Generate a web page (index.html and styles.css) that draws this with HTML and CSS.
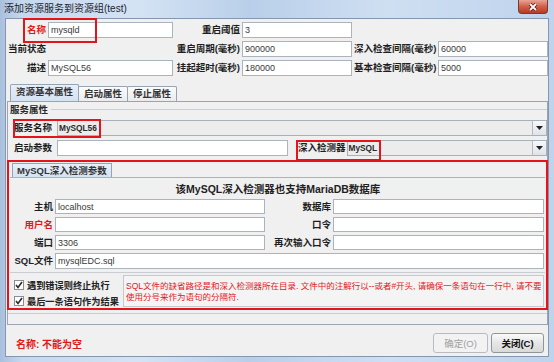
FILE: index.html
```html
<!DOCTYPE html>
<html lang="zh-CN">
<head>
  <meta charset="UTF-8" />
  <title>添加资源服务到资源组(test)</title>
  <link rel="stylesheet" href="styles.css">
</head>
<body>
  <div class="window">
    <div class="titlebar">
      <span class="title">添加资源服务到资源组(test)</span>
      <span class="close">
        <svg width="12" height="10" viewBox="0 0 12 10"><path d="M3 2 L9 8 M9 2 L3 8" stroke="#5a1a12" stroke-width="3.2"/><path d="M3 2 L9 8 M9 2 L3 8" stroke="#fff" stroke-width="1.8"/></svg>
      </span>
    </div>

    <div class="client">
      <div class="top-form">
        <label class="lbl req">名称</label>
        <input class="field" value="mysqld" />
        <label class="lbl">重启阈值</label>
        <input class="field" value="3" />
        <span></span><span></span>

        <label class="lbl">当前状态</label>
        <span class="blank"></span>
        <label class="lbl">重启周期(毫秒)</label>
        <input class="field" value="900000" />
        <label class="lbl">深入检查间隔(毫秒)</label>
        <input class="field" value="60000" />

        <label class="lbl">描述</label>
        <input class="field" value="MySQL56" />
        <label class="lbl">挂起超时(毫秒)</label>
        <input class="field" value="180000" />
        <label class="lbl">基本检查间隔(毫秒)</label>
        <input class="field" value="5000" />
      </div>

      <div class="tabs">
        <span class="tab active">资源基本属性</span>
        <span class="tab">启动属性</span>
        <span class="tab">停止属性</span>
      </div>

      <div class="tab-panel">
        <div class="group-head">服务属性</div>
        <div class="group-body">
          <div class="row">
            <label class="lbl row-lbl">服务名称</label>
            <div class="combo">
              <span class="combo-value">MySQL56</span>
              <span class="combo-btn"><svg width="7" height="5" viewBox="0 0 7 5"><path d="M0 0 H7 L3.5 4 Z" fill="#222"/></svg></span>
            </div>
          </div>
          <div class="row">
            <label class="lbl row-lbl">启动参数</label>
            <input class="field args" value="" />
            <label class="lbl det-lbl">深入检测器</label>
            <div class="combo">
              <span class="combo-value">MySQL</span>
              <span class="combo-btn"><svg width="7" height="5" viewBox="0 0 7 5"><path d="M0 0 H7 L3.5 4 Z" fill="#222"/></svg></span>
            </div>
          </div>

          <div class="detector">
            <div class="subtabs">
              <span class="subtab">MySQL深入检测参数</span>
            </div>
            <div class="subpanel">
              <div class="heading">该MySQL深入检测器也支持MariaDB数据库</div>
              <div class="param-grid">
                <label class="lbl">主机</label>
                <input class="field" value="localhost" />
                <label class="lbl">数据库</label>
                <input class="field" value="" />

                <label class="lbl req">用户名</label>
                <input class="field" value="" />
                <label class="lbl">口令</label>
                <input class="field" value="" />

                <label class="lbl">端口</label>
                <input class="field" value="3306" />
                <label class="lbl">再次输入口令</label>
                <input class="field" value="" />

                <label class="lbl">SQL文件</label>
                <input class="field wide" value="mysqlEDC.sql" />
              </div>
            </div>
            <div class="options">
              <div class="checks">
                <div class="check"><span class="box"><svg width="8" height="8" viewBox="0 0 8 8"><path d="M1 4 L3 6.5 L7 1" fill="none" stroke="#2b2b2b" stroke-width="1.6"/></svg></span>遇到错误则终止执行</div>
                <div class="check"><span class="box"><svg width="8" height="8" viewBox="0 0 8 8"><path d="M1 4 L3 6.5 L7 1" fill="none" stroke="#2b2b2b" stroke-width="1.6"/></svg></span>最后一条语句作为结果</div>
              </div>
              <div class="note">SQL文件的缺省路径是和深入检测器所在目录. 文件中的注解行以--或者#开头, 请确保一条语句在一行中, 请不要<br>使用分号来作为语句的分隔符.</div>
            </div>
          </div>
        </div>
      </div>

      <div class="footer">
        <span class="status">名称: 不能为空</span>
        <div class="buttons">
          <button class="btn" disabled>确定(O)</button>
          <button class="btn primary">关闭(C)</button>
        </div>
      </div>
    </div>

    <!-- annotation boxes -->
    <span class="mark mark-name"></span>
    <span class="mark mark-service"></span>
    <span class="mark mark-detector"></span>
  </div>
</body>
</html>
```

FILE: styles.css
```css
body {
  margin: 0;
  width: 554px;
  height: 362px;
  overflow: hidden;
  font-family: "Liberation Sans", "Noto Sans CJK SC", sans-serif;
}
.window {
  position: relative;
  box-sizing: border-box;
  width: 554px;
  height: 362px;
  padding: 0 5px 5px 5px;
  display: flex;
  flex-direction: column;
  background: linear-gradient(90deg, #a9c0dd 0, #c6d8ee 4%, #d4e3f4 25%, #b9cfe9 45%, #cfdff2 70%, #bed3ec 100%);
}
.titlebar {
  height: 18px;
  display: flex;
  justify-content: space-between;
  align-items: flex-start;
}
.title {
  margin: 3px 0 0 -1px;
  font-size: 10px;
  line-height: 12px;
  color: #1c2430;
}
.close {
  width: 30px;
  height: 14px;
  margin-right: 1px;
  box-sizing: border-box;
  border: 1px solid #7a3a30;
  border-top: none;
  border-radius: 0 0 4px 4px;
  background: linear-gradient(#e9a596, #d0604a 50%, #b93a24);
  display: flex;
  align-items: center;
  justify-content: center;
}
.client {
  flex: 1;
  display: flex;
  flex-direction: column;
  background: #f0f0f0;
  border: 1px solid #8596ae;
}
.lbl {
  font-size: 9.5px;
  font-weight: bold;
  color: #1e1e1e;
  text-align: right;
  white-space: nowrap;
  line-height: 16px;
}
.lbl.req {
  color: #e01818;
}
.field {
  box-sizing: border-box;
  width: 100%;
  min-width: 0;
  height: 16px;
  margin: 0;
  padding: 0 2px;
  border: 1px solid #abb3bd;
  background: #fff;
  font-family: "Liberation Sans", sans-serif;
  font-size: 9px;
  color: #3a3a3a;
  outline: none;
}

/* top form */
.top-form {
  display: grid;
  grid-template-columns: 39px 125px 65px 110px 82px 110px;
  grid-auto-rows: 16px;
  column-gap: 2px;
  row-gap: 3px;
  padding: 3px 0 0 1px;
}

/* tabs */
.tabs {
  display: flex;
  align-items: flex-end;
  height: 16px;
  margin: 9px 0 0 4px;
}
.tab {
  height: 14px;
  line-height: 14px;
  padding: 0 5px;
  margin-right: -1px;
  border: 1px solid #97a3b1;
  border-bottom: none;
  border-radius: 2px 2px 0 0;
  background: linear-gradient(#fbfbfb, #e9ebee);
  font-size: 9.5px;
  font-weight: bold;
  color: #333;
}
.tab.active {
  height: 16px;
  background: linear-gradient(#e7eff9, #d5e2f2);
  position: relative;
  z-index: 1;
}
.tab-panel {
  flex: 1;
  margin-left: 1px;
  border: 1px solid #9aa4b0;
  display: flex;
  flex-direction: column;
}
.group-head {
  display: flex;
  align-items: center;
  height: 12px;
  margin-top: 1px;
  padding-left: 2px;
  font-size: 9.5px;
  font-weight: bold;
  color: #2a2a2a;
}
.group-head::after {
  content: "";
  flex: 1;
  margin-left: 3px;
  border-top: 1px solid #c9cdd2;
}
.group-body {
  padding: 5px 0 3px 0;
  border-bottom: 1px solid #c9cdd2;
}
.row {
  display: flex;
  align-items: center;
  height: 16px;
  margin-bottom: 4px;
}
.row-lbl {
  width: 44px;
  margin-right: 5px;
}
.args {
  width: 231px;
}
.det-lbl {
  margin: 0 1px 0 10px;
}
.combo {
  flex: 1;
  display: flex;
  box-sizing: border-box;
  height: 16px;
  border: 1px solid #a8b0ba;
  background: #ececec;
}
.combo-value {
  flex: 1;
  padding-left: 1px;
  font-size: 8.3px;
  font-weight: bold;
  line-height: 14px;
  color: #2a2a2a;
}
.combo-btn {
  width: 13px;
  border-left: 1px solid #b3bac3;
  background: linear-gradient(#f7f8fa, #dfe3e8);
  display: flex;
  align-items: center;
  justify-content: center;
}

/* detector box */
.detector {
  margin: 2px -1px 0;
  border: 2px solid #e4141b;
}
.subtabs {
  display: flex;
  height: 14px;
  padding: 1px 0 0 3px;
}
.subtab {
  line-height: 13px;
  padding: 0 4px;
  border: 1px solid #97a3b1;
  border-bottom: none;
  background: linear-gradient(#e7eff9, #d5e2f2);
  font-size: 9.5px;
  font-weight: bold;
  color: #333;
}
.subpanel {
  margin: 0 1px;
  padding: 4px 0 3px 1px;
  border-top: 1px solid #a9b3bf;
  border-bottom: 1px solid #c9cdd2;
}
.heading {
  height: 14px;
  line-height: 14px;
  text-align: center;
  font-size: 10.5px;
  font-weight: bold;
  color: #222;
}
.param-grid {
  display: grid;
  grid-template-columns: 42px 210px 64px 211px;
  grid-template-rows: 15px 15px 15px 16px;
  column-gap: 2px;
  row-gap: 3px;
  margin-top: 3px;
}
.param-grid .field {
  height: 100%;
}
.param-grid .lbl {
  line-height: 15px;
}
.param-grid .wide {
  grid-column: 2 / 5;
}
.options {
  display: flex;
  height: 35px;
}
.checks {
  width: 109px;
  padding: 4px 0 0 5px;
}
.check {
  display: flex;
  align-items: center;
  height: 16px;
  font-size: 9.2px;
  font-weight: bold;
  color: #222;
  white-space: nowrap;
}
.box {
  box-sizing: border-box;
  width: 10px;
  height: 10px;
  margin-right: 3px;
  border: 1px solid #8a8f96;
  background: #fff;
  display: flex;
  align-items: center;
  justify-content: center;
}
.note {
  flex: 1;
  height: 32px;
  box-sizing: border-box;
  margin: 2px 2px 0 0;
  padding: 5px 0 0 2px;
  border: 1px solid #c5c9ce;
  background: #f4f4f4;
  font-size: 8.5px;
  line-height: 11px;
  color: #e4141b;
  white-space: nowrap;
  overflow: hidden;
}

/* footer */
.footer {
  height: 31px;
  box-sizing: border-box;
  padding: 5px 4px 0 10px;
  display: flex;
  align-items: center;
  justify-content: space-between;
}
.status {
  font-size: 10px;
  font-weight: bold;
  color: #e01818;
}
.buttons {
  display: flex;
  gap: 3px;
}
.btn {
  width: 55px;
  height: 20px;
  padding: 0;
  border: 1px solid #8e959d;
  border-radius: 3px;
  background: linear-gradient(#fafafa, #e6e6e6 50%, #d9d9d9);
  font-family: "Liberation Sans", "Noto Sans CJK SC", sans-serif;
  font-size: 9.5px;
  color: #111;
}
.btn:disabled {
  border-color: #b8bcc1;
  background: #f2f2f2;
  color: #a0a0a0;
}
.btn.primary {
  width: 53px;
  font-weight: bold;
}

/* red annotation boxes */
.mark {
  position: absolute;
  box-sizing: border-box;
  border: 2px solid #e4141b;
  pointer-events: none;
}
.mark-name {
  left: 23px;
  top: 18px;
  width: 74px;
  height: 25px;
}
.mark-service {
  left: 13px;
  top: 119px;
  width: 88px;
  height: 19px;
}
.mark-detector {
  left: 296px;
  top: 140px;
  width: 85px;
  height: 21px;
}
```
